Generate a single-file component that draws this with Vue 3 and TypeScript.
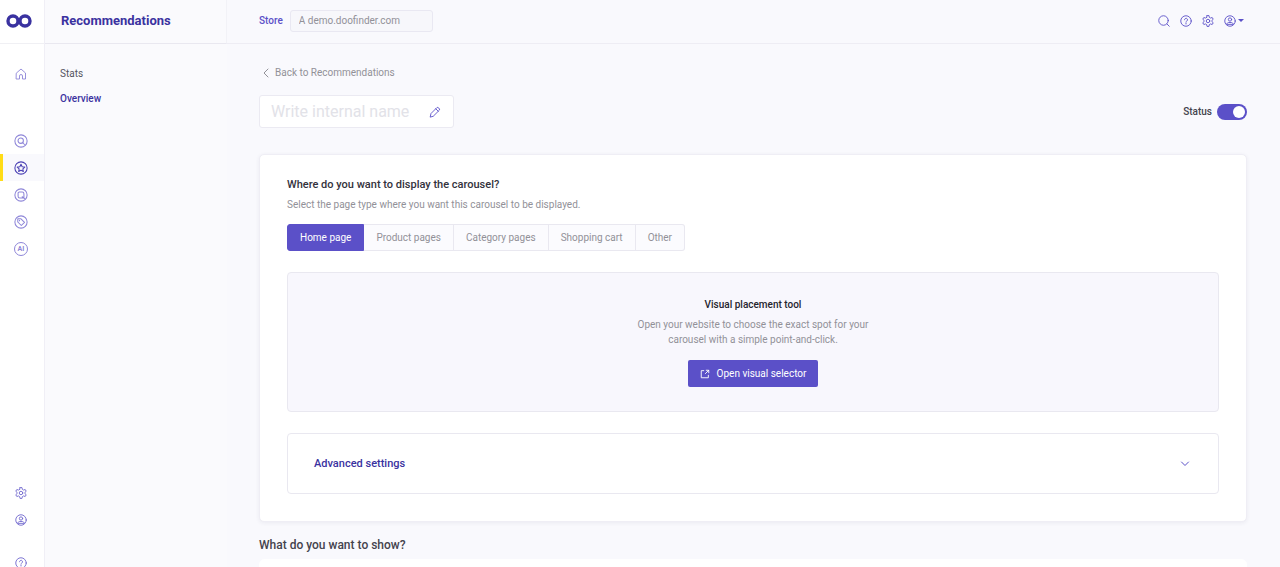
<script setup lang="ts">
import { ref } from 'vue'

interface RailItem {
  icon: string
  label: string
}

const products: RailItem[] = [
  { icon: 'search-ring', label: 'Search' },
  { icon: 'star-ring', label: 'Recommendations' },
  { icon: 'quiz-ring', label: 'Quiz maker' },
  { icon: 'tag-ring', label: 'Merchandising' },
  { icon: 'ai-ring', label: 'AI assistant' },
]
const pages: string[] = ['Home page', 'Product pages', 'Category pages', 'Shopping cart', 'Other']

const activeProduct = ref('Recommendations')
const activePage = ref('Home page')
const internalName = ref('')
const store = ref('A demo.doofinder.com')
const enabled = ref(true)
</script>

<template>
  <div class="shell">
    <svg class="sprite" aria-hidden="true">
      <symbol id="home" viewBox="0 0 24 24"><path d="M3 10 12 2l9 8v12h-6v-6a3 3 0 0 0-6 0v6H3z" /></symbol>
      <symbol id="search" viewBox="0 0 24 24"><circle cx="11" cy="11" r="9.500" /><path d="m18 18 4.500 4.500" /></symbol>
      <symbol id="help" viewBox="0 0 24 24"><circle cx="12" cy="12" r="10.500" /><path d="M9 9.500a3 3 0 1 1 4.500 2.600c-1 .6-1.500 1.100-1.500 2.200M12 16.500v1.500" /></symbol>
      <symbol id="gear" viewBox="0 0 24 24"><circle cx="12" cy="12" r="3.500" /><path d="M10 1.200h4l.7 3.600 2.300 1.300 3.400-1.100 2 3.500-2.600 2.400v2.200l2.600 2.400-2 3.500-3.400-1.100-2.300 1.300-.7 3.600h-4l-.7-3.600L7 17.900l-3.400 1.100-2-3.500 2.600-2.400v-2.200L1.600 8.500l2-3.500L7 6.100l2.300-1.300z" /></symbol>
      <symbol id="user" viewBox="0 0 24 24"><circle cx="12" cy="12" r="10.500" /><circle cx="12" cy="9" r="3.300" /><path d="M5.500 18c.8-2.400 2.500-3 4-3h5c1.500 0 3.200.6 4 3z" /></symbol>
      <symbol id="search-ring" viewBox="0 0 24 24"><circle cx="12" cy="12" r="10.500" /><circle cx="11.500" cy="11.500" r="4.600" /><path d="m15 15 3 3" /></symbol>
      <symbol id="star-ring" viewBox="0 0 24 24"><circle cx="12" cy="12" r="10.500" /><path d="m12 5.500 2 4.200 4.500.6-3.300 3.200.8 4.600-4-2.200-4 2.200.8-4.600-3.300-3.200 4.500-.6z" /></symbol>
      <symbol id="quiz-ring" viewBox="0 0 24 24"><circle cx="12" cy="12" r="10.500" /><path d="M9 7h5a3 3 0 0 1 3 3v7H10a3 3 0 0 1-3-3V9a2 2 0 0 1 2-2zM14 15l4 3" /></symbol>
      <symbol id="tag-ring" viewBox="0 0 24 24"><circle cx="12" cy="12" r="10.500" /><path d="M6.500 6.500h5.500l6 6-5.500 5.500-6-6zM9.500 9.200v.8" /></symbol>
      <symbol id="pencil" viewBox="0 0 24 24"><path d="m2.500 21.500 1.500-6.500L16 3c1.500-1.500 6.500 3 5 5L9 20zM13.500 5.500l5 5" /></symbol>
      <symbol id="external" viewBox="0 0 24 24"><path d="M9 4H3v17h17v-6M15 3h6v6M21 3l-8 8" /></symbol>
    </svg>

    <nav class="rail" aria-label="Products">
      <a class="logo" href="#" aria-label="Dashboard">
        <svg viewBox="0 0 26 14"><circle cx="7" cy="7" r="5" /><circle cx="19" cy="7" r="5" /></svg>
      </a>
      <a class="rail-link home" href="#" aria-label="Home"><svg class="icon"><use href="#home" /></svg></a>
      <div class="rail-group">
        <a
          v-for="item in products"
          :key="item.label"
          class="rail-link"
          :class="{ active: item.label === activeProduct }"
          href="#"
          :aria-label="item.label"
          @click.prevent="activeProduct = item.label"
        >
          <span v-if="item.icon === 'ai-ring'" class="ai">AI</span>
          <svg v-else class="icon large"><use :href="'#' + item.icon" /></svg>
        </a>
      </div>
      <div class="rail-group foot">
        <a class="rail-link" href="#" aria-label="Settings"><svg class="icon"><use href="#gear" /></svg></a>
        <a class="rail-link" href="#" aria-label="Account"><svg class="icon"><use href="#user" /></svg></a>
        <a class="rail-link help" href="#" aria-label="Help"><svg class="icon"><use href="#help" /></svg></a>
      </div>
    </nav>

    <aside class="panel">
      <h1 class="panel-title">Recommendations</h1>
      <nav class="panel-nav" aria-label="Recommendations">
        <a href="#">Stats</a>
        <a class="current" href="#">Overview</a>
      </nav>
    </aside>

    <div class="work">
      <header class="topbar">
        <label class="store-label" for="store">Store</label>
        <input id="store" v-model="store" class="store" type="text" />
        <div class="tools">
          <button type="button" aria-label="Search"><svg class="icon"><use href="#search" /></svg></button>
          <button type="button" aria-label="Help"><svg class="icon"><use href="#help" /></svg></button>
          <button type="button" aria-label="Settings"><svg class="icon"><use href="#gear" /></svg></button>
          <button type="button" aria-label="Account"><svg class="icon"><use href="#user" /></svg><span class="caret"></span></button>
        </div>
      </header>

      <main class="content">
        <a class="back" href="#">
          <svg viewBox="0 0 8 10"><path d="M6 1 2 5l4 4" /></svg>
          Back to Recommendations
        </a>

        <div class="name-row">
          <div class="name-box">
            <input v-model="internalName" type="text" placeholder="Write internal name" aria-label="Internal name" />
            <svg class="icon"><use href="#pencil" /></svg>
          </div>
          <label class="status">
            Status
            <input v-model="enabled" type="checkbox" role="switch" />
          </label>
        </div>

        <section class="card">
          <h2>Where do you want to display the carousel?</h2>
          <p class="hint">Select the page type where you want this carousel to be displayed.</p>
          <div class="tabs">
            <button
              v-for="page in pages"
              :key="page"
              type="button"
              :class="{ selected: page === activePage }"
              :aria-pressed="page === activePage"
              @click="activePage = page"
            >{{ page }}</button>
          </div>

          <div class="placement">
            <h3>Visual placement tool</h3>
            <p>Open your website to choose the exact spot for your carousel with a simple point-and-click.</p>
            <button type="button" class="primary"><svg class="icon"><use href="#external" /></svg>Open visual selector</button>
          </div>

          <button type="button" class="advanced">
            Advanced settings
            <svg viewBox="0 0 10 6"><path d="m1.500 1 3.500 3.500L8.500 1" /></svg>
          </button>
        </section>

        <h2 class="next-title">What do you want to show?</h2>
        <section class="card next"></section>
      </main>
    </div>
  </div>
</template>

<style>
body {
  background: #f9f9fd;
}
</style>

<style scoped>
.shell {
  --violet: #5b50c8;
  --indigo: #3a32a0;
  --line: #e9e8f0;
  display: grid;
  grid-template-columns: 45px 182px minmax(0, 1fr);
  height: 100vh;
  overflow: hidden;
  font-family: Roboto, "Liberation Sans", sans-serif;
  font-size: 10px;
  line-height: 15px;
  color: #929198;
}
.shell * {
  box-sizing: border-box;
}
.sprite {
  position: absolute;
  width: 0;
  height: 0;
}
a {
  color: inherit;
  text-decoration: none;
}
button,
input {
  margin: 0;
  font: inherit;
  color: inherit;
}
h1,
h2,
h3,
p {
  margin: 0;
}
svg {
  fill: none;
  stroke: currentColor;
  stroke-linecap: round;
  stroke-linejoin: round;
}
.icon {
  display: block;
  width: 12px;
  height: 12px;
  stroke-width: 1.8;
}
.icon.large {
  width: 14px;
  height: 14px;
}

.rail {
  display: flex;
  flex-direction: column;
  min-height: 0;
  background: #fff;
  border-right: 1px solid #f0eff6;
}
.logo {
  display: flex;
  flex: none;
  align-items: center;
  height: 44px;
  padding: 0 6px 2px;
  color: var(--indigo);
  border-bottom: 1px solid #f0f0f4;
}
.logo svg {
  width: 26px;
  height: 14px;
  stroke-width: 3.4;
}
.rail-link {
  display: flex;
  flex: none;
  align-items: center;
  justify-content: center;
  height: 27px;
  padding-right: 2px;
  color: #8e86d8;
}
.rail-link.home {
  margin: 16px 0 40px;
}
.rail-link.active {
  color: #4a40b4;
  background: #f9f9fd;
  border-left: 3px solid #ffdc17;
  padding-right: 5px;
}
.ai {
  width: 14px;
  height: 14px;
  border: 1px solid currentColor;
  border-radius: 50%;
  font-size: 7px;
  font-weight: 700;
  line-height: 12px;
  text-align: center;
}
.foot {
  margin-top: auto;
}
.foot .rail-link {
  color: #7168ce;
}
.foot .help {
  margin: 16px 0 -9px;
}

.panel {
  background: #fafafd;
}
.panel-title {
  height: 44px;
  padding: 0 16px;
  font-size: 13px;
  font-weight: 700;
  line-height: 42px;
  color: var(--indigo);
  border-bottom: 1px solid var(--line);
  border-right: 1px solid #f2f2f7;
}
.panel-nav {
  display: flex;
  flex-direction: column;
  gap: 10px;
  padding: 22px 15px;
  color: #55545f;
}
.current {
  font-weight: 500;
  color: var(--indigo);
}

.work {
  display: flex;
  flex-direction: column;
  min-width: 0;
  min-height: 0;
}
.topbar {
  display: flex;
  flex: none;
  align-items: center;
  gap: 7px;
  height: 44px;
  padding: 0 36px 2px 32px;
  border-bottom: 1px solid #eeedf4;
}
.store-label {
  font-weight: 500;
  color: var(--violet);
}
.store {
  width: 143px;
  height: 22px;
  padding: 0 8px;
  background: #f7f7fb;
  border: 1px solid #e9e8f2;
  border-radius: 3px;
}
.tools {
  display: flex;
  gap: 10px;
  margin-left: auto;
}
.tools button {
  display: flex;
  align-items: center;
  gap: 2px;
  padding: 0;
  color: var(--violet);
  background: none;
  border: 0;
}
.caret {
  border: 3px solid transparent;
  border-top-color: currentColor;
  border-bottom: 0;
}

.content {
  flex: 1;
  min-height: 0;
  padding: 21px 33px 0 32px;
  overflow: hidden;
}
.back {
  display: flex;
  align-items: center;
  gap: 5px;
  width: max-content;
  padding-left: 3px;
}
.back svg {
  width: 8px;
  height: 10px;
}
.name-row {
  display: flex;
  align-items: center;
  justify-content: space-between;
  margin: 15px 0 26px;
}
.name-box {
  display: flex;
  align-items: center;
  width: 195px;
  height: 33px;
  padding: 0 12px 0 11px;
  color: var(--violet);
  background: #fff;
  border: 1px solid #ebeaf2;
  border-radius: 3px;
}
.name-box input {
  flex: 1;
  min-width: 0;
  padding: 0;
  font-size: 16px;
  line-height: 24px;
  color: #44434d;
  background: none;
  border: 0;
}
.name-box input::placeholder {
  color: #e2e2e8;
  opacity: 1;
}
.status {
  display: flex;
  align-items: center;
  gap: 5px;
  font-weight: 500;
  color: #44434d;
}
.status input {
  display: flex;
  align-items: center;
  width: 30px;
  height: 16px;
  padding: 0 2px;
  appearance: none;
  background: #c9c8d3;
  border-radius: 8px;
}
.status input::before {
  width: 12px;
  height: 12px;
  content: "";
  background: #fff;
  border-radius: 50%;
}
.status input:checked {
  justify-content: flex-end;
  background: var(--violet);
}

.card {
  padding: 22px 27px 27px;
  background: #fff;
  border: 1px solid #efeef5;
  border-radius: 5px;
  box-shadow: 0 1px 4px rgba(40, 36, 80, 0.07);
}
.card h2 {
  font-size: 11px;
  font-weight: 500;
  line-height: 16px;
  color: #33323c;
}
.hint {
  margin: 4px 0 12px;
}
.tabs {
  display: flex;
  width: max-content;
}
.tabs button {
  height: 27px;
  padding: 0 12px;
  background: #fbfbfe;
  border: 1px solid var(--line);
  border-left-width: 0;
}
.tabs button:first-child {
  border-left-width: 1px;
  border-radius: 3px 0 0 3px;
}
.tabs button:last-child {
  border-radius: 0 3px 3px 0;
}
.tabs .selected {
  color: #fff;
  background: var(--violet);
  border-color: var(--violet);
}
.placement {
  display: flex;
  flex-direction: column;
  align-items: center;
  margin: 21px 0;
  padding: 24px;
  text-align: center;
  background: #f8f7fd;
  border: 1px solid var(--line);
  border-radius: 4px;
}
.placement h3 {
  font-size: 10px;
  font-weight: 500;
  line-height: 15px;
  color: #25242e;
}
.placement p {
  max-width: 240px;
  margin: 5px 0 13px;
}
.primary {
  display: flex;
  align-items: center;
  gap: 7px;
  height: 27px;
  padding: 0 12px;
  color: #fff;
  background: var(--violet);
  border: 0;
  border-radius: 2px;
}
.primary .icon {
  width: 10px;
  height: 10px;
  stroke-width: 2.2;
}
.advanced {
  display: flex;
  align-items: center;
  justify-content: space-between;
  width: 100%;
  height: 61px;
  padding: 0 28px 0 26px;
  font-size: 11px;
  font-weight: 500;
  color: var(--indigo);
  background: #fff;
  border: 1px solid var(--line);
  border-radius: 4px;
}
.advanced svg {
  width: 10px;
  height: 6px;
  color: var(--violet);
}
.next-title {
  margin: 14px 0 5px;
  font-size: 12px;
  font-weight: 500;
  line-height: 18px;
  color: #44434d;
}
.next {
  min-height: 120px;
  border-color: #fff;
  box-shadow: none;
}
</style>
